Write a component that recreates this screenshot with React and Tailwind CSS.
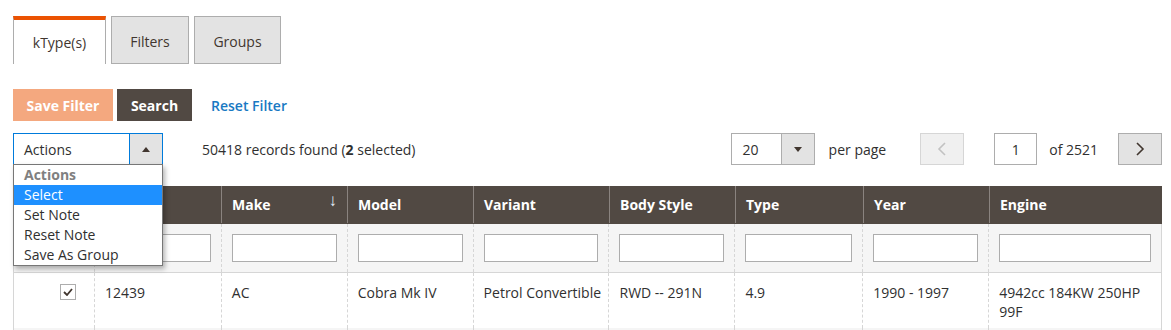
import React from 'react';

const cols = [
    { key: 'check', label: '', w: 'w-[81px]' },
    { key: 'id', label: 'ID', w: 'w-[127px]' },
    { key: 'make', label: 'Make', w: 'w-[126px]', sort: true },
    { key: 'model', label: 'Model', w: 'w-[126px]' },
    { key: 'variant', label: 'Variant', w: 'w-[136px]' },
    { key: 'body', label: 'Body Style', w: 'w-[126px]' },
    { key: 'type', label: 'Type', w: 'w-[128px]' },
    { key: 'year', label: 'Year', w: 'w-[126px]' },
    { key: 'engine', label: 'Engine', w: 'w-[173px]' },
];

const row = {
    id: '12439',
    make: 'AC',
    model: 'Cobra Mk IV',
    variant: 'Petrol Convertible',
    body: 'RWD -- 291N',
    type: '4.9',
    year: '1990 - 1997',
    engine: '4942cc 184KW 250HP 99F',
};

function Chevron({ dir, className }) {
    return (
        <svg width="10" height="14" viewBox="0 0 10 14" className={className}>
            {dir === 'left'
                ? <path d="M8 1 L2 7 L8 13" fill="none" stroke="currentColor" strokeWidth="1.6" />
                : <path d="M2 1 L8 7 L2 13" fill="none" stroke="currentColor" strokeWidth="1.6" />}
        </svg>
    );
}

export default function App() {
    return (
        <div className="min-h-[330px] bg-white pl-[13px] pt-[16px] text-[14px] text-[#303030]" style={{ fontFamily: '"Open Sans", "Noto Sans", sans-serif' }}>
            {/* tabs */}
            <div className="flex h-[48px] items-stretch gap-[5px]">
                <div className="flex w-[93px] items-center justify-center border-x border-t-[4px] border-x-[#adadad] border-t-[#eb5202] bg-white text-[#41362f]">
                    kType(s)
                </div>
                <div className="flex w-[78px] items-center justify-center border border-[#adadad] bg-[#e3e3e3] pt-[2px] text-[#41362f]">
                    Filters
                </div>
                <div className="flex w-[87px] items-center justify-center border border-[#adadad] bg-[#e3e3e3] pt-[2px] text-[#41362f]">
                    Groups
                </div>
            </div>

            {/* filter buttons */}
            <div className="mt-[25px] flex h-[32px] items-center">
                <button className="h-full w-[100px] bg-[#f4a87f] font-bold text-white">Save Filter</button>
                <button className="ml-[4px] h-full w-[75px] bg-[#514943] font-bold text-white">Search</button>
                <button className="ml-[19px] font-semibold text-[#1979c3]">Reset Filter</button>
            </div>

            {/* actions / pager */}
            <div className="relative mt-[12px] flex h-[32px] w-[1149px] items-center">
                <div className="relative flex h-full w-[150px] border border-[#007bdb] bg-white">
                    <div className="flex flex-1 items-center pl-[10px]">Actions</div>
                    <div className="flex w-[33px] items-center justify-center border-l border-[#007bdb] bg-[#e3e3e3]">
                        <span className="block h-0 w-0 border-x-[4px] border-b-[5px] border-x-transparent border-b-[#41362f]"></span>
                    </div>
                    <div className="absolute left-[-1px] top-[30px] z-10 w-[150px] border border-[#777] bg-white shadow-[2px_3px_5px_rgba(0,0,0,0.3)]">
                        <div className="h-[20px] pl-[10px] font-bold leading-[20px] text-[#808080]">Actions</div>
                        <div className="h-[20px] bg-[#1e90ff] pl-[10px] leading-[20px] text-white">Select</div>
                        <div className="h-[20px] pl-[10px] leading-[20px]">Set Note</div>
                        <div className="h-[20px] pl-[10px] leading-[20px]">Reset Note</div>
                        <div className="h-[20px] pl-[10px] leading-[20px]">Save As Group</div>
                    </div>
                </div>
                <div className="ml-[39px]">
                    50418 records found (<b>2</b> selected)
                </div>

                <div className="ml-auto flex h-full items-center">
                    <div className="flex h-full w-[84px] border border-[#adadad]">
                        <div className="flex flex-1 items-center pl-[11px]">20</div>
                        <div className="flex w-[33px] items-center justify-center border-l border-[#adadad] bg-[#e3e3e3]">
                            <span className="block h-0 w-0 border-x-[4px] border-t-[5px] border-x-transparent border-t-[#41362f]"></span>
                        </div>
                    </div>
                    <span className="ml-[14px]">per page</span>
                    <div className="ml-[34px] flex h-full w-[44px] items-center justify-center border border-[#d6d6d6] bg-[#f0f0f0] text-[#c2c2c2]">
                        <Chevron dir="left" />
                    </div>
                    <div className="ml-[30px] flex h-full w-[43px] items-center justify-center border border-[#adadad] bg-white">1</div>
                    <span className="ml-[12px]">of 2521</span>
                    <div className="ml-[20px] flex h-full w-[44px] items-center justify-center border border-[#adadad] bg-[#e3e3e3] text-[#41362f]">
                        <Chevron dir="right" />
                    </div>
                </div>
            </div>

            {/* grid */}
            <div className="mt-[21px] w-[1149px]">
                <div className="flex h-[38px] bg-[#514943] pb-[1px] font-bold text-white">
                    {cols.map((c, i) => (
                        <div key={c.key} className={`${c.w} relative flex items-center pl-[10px] ${i > 0 ? 'border-l border-[#8a837f]' : ''}`}>
                            {c.label}
                            {c.sort && <span className="absolute right-[10px] top-[1px] text-[17px] font-normal text-[#e3eefa]">↓</span>}
                        </div>
                    ))}
                </div>
                <div className="flex h-[49px] border-x border-b border-[#d6d6d6] bg-[#f5f5f5]">
                    {cols.map((c, i) => (
                        <div key={c.key} className={`${i === 0 ? 'w-[80px]' : c.w} flex items-center px-[10px] ${i === cols.length - 1 ? 'w-[171px]' : ''} ${i > 0 ? 'border-l border-dashed border-[#d6d6d6]' : ''}`}>
                            {i > 0 && <div className="h-[28px] w-full border border-[#adadad] bg-white"></div>}
                        </div>
                    ))}
                </div>
                <div className="flex h-[55px] border-x border-[#d6d6d6] bg-white">
                    {cols.map((c, i) => (
                        <div key={c.key} className={`${i === 0 ? 'w-[80px]' : c.w} ${i === cols.length - 1 ? 'w-[171px]' : ''} pt-[10px] leading-[19px] ${i > 0 ? 'border-l border-dashed border-[#d6d6d6] pl-[10px] pr-[2px]' : 'flex justify-end pr-[18px] pt-[11px]'}`}>
                            {i === 0 ? (
                                <span className="flex h-[16px] w-[16px] items-center justify-center border border-[#adadad] bg-white">
                                    <svg width="10" height="8" viewBox="0 0 10 8">
                                        <path d="M1 4 L4 7 L9 1" fill="none" stroke="#41362f" strokeWidth="1.8" />
                                    </svg>
                                </span>
                            ) : row[c.key]}
                        </div>
                    ))}
                </div>
                <div className="flex h-[55px] border-x border-[#d6d6d6] bg-[#f5f5f5]">
                    {cols.map((c, i) => (
                        <div key={c.key} className={`${i === 0 ? 'w-[80px]' : c.w} ${i === cols.length - 1 ? 'w-[171px]' : ''} ${i > 0 ? 'border-l border-dashed border-[#d6d6d6]' : ''}`}></div>
                    ))}
                </div>
            </div>
        </div>
    );
}
